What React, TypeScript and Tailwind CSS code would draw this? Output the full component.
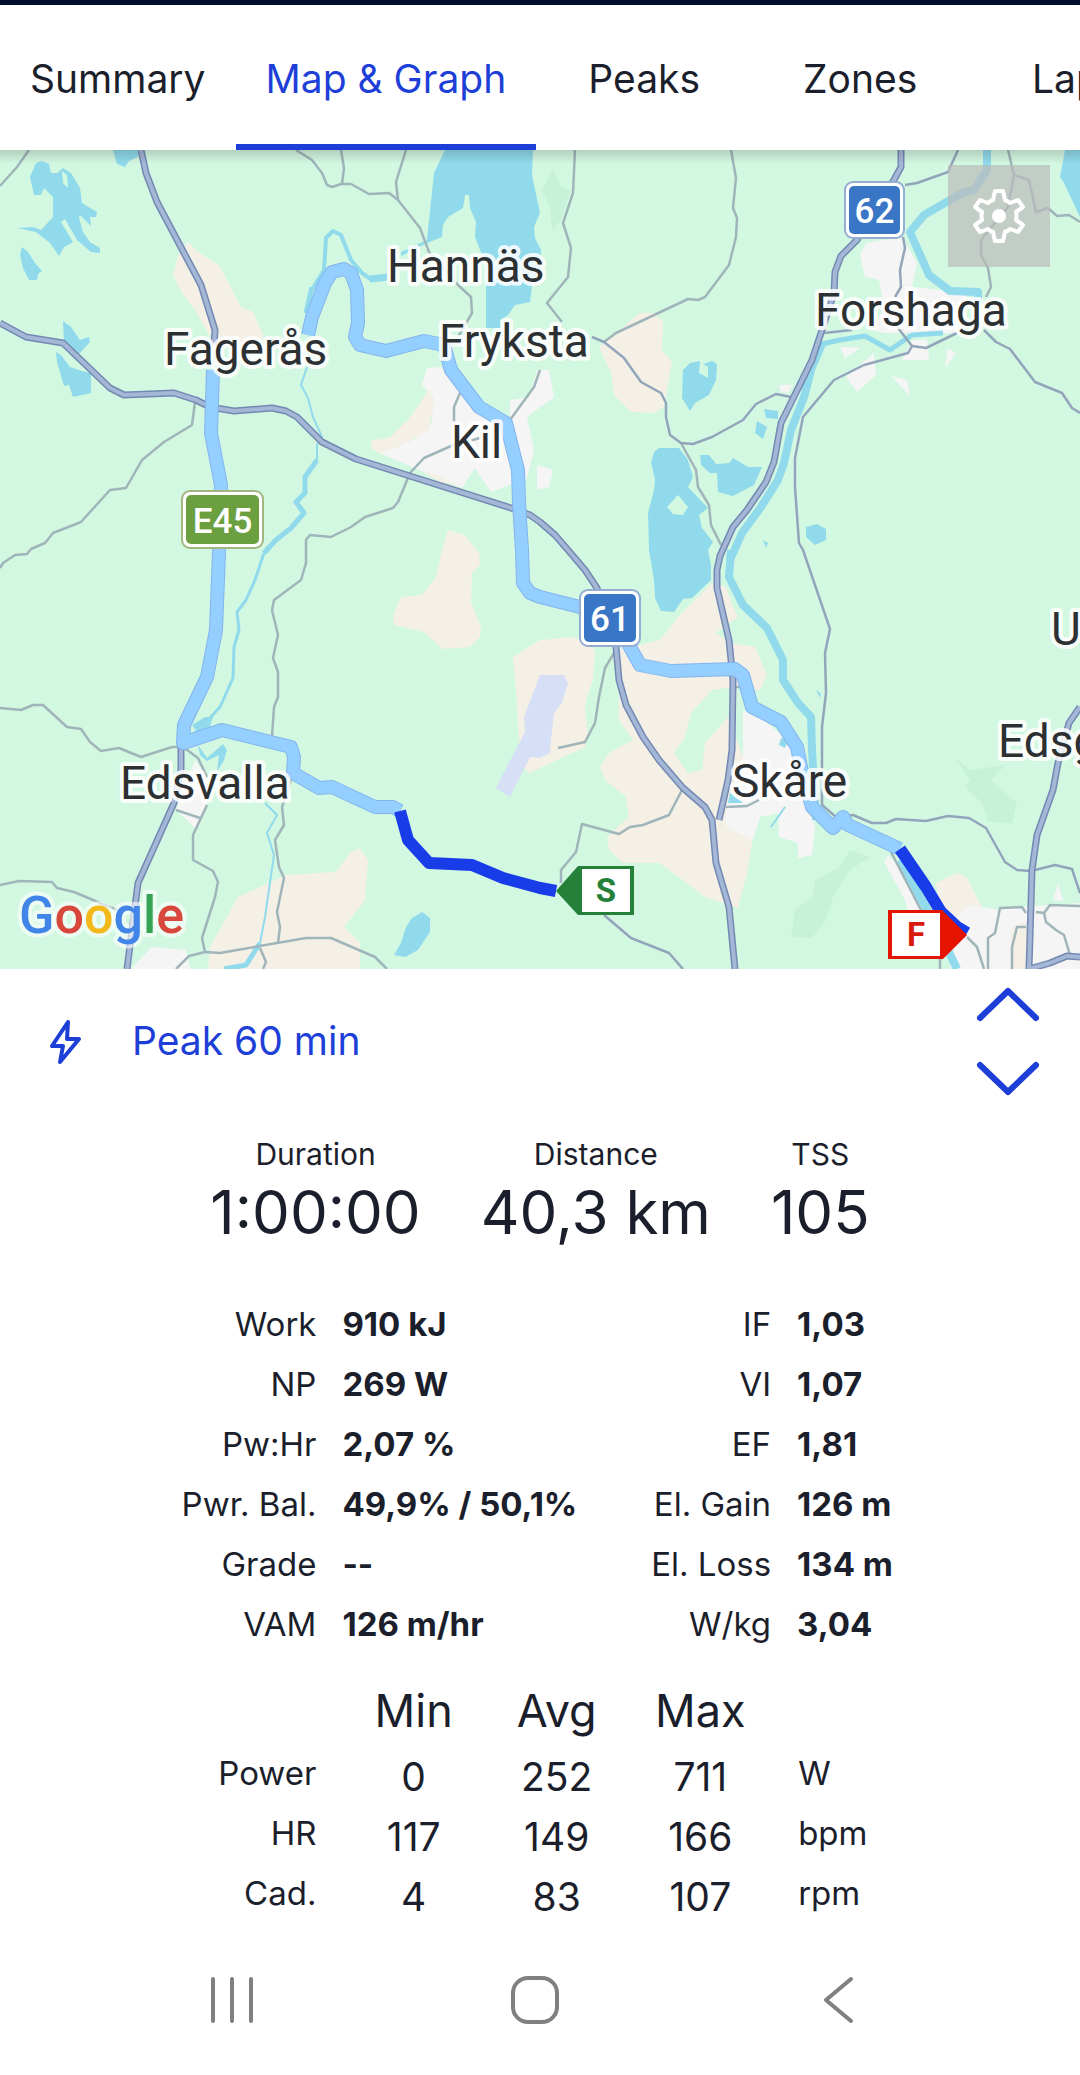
import { useState } from 'react';

// Mock Data
const tabs = ['Summary', 'Map & Graph', 'Peaks', 'Zones', 'Laps'];

const totals = [
  { label: 'Duration', value: '1:00:00' },
  { label: 'Distance', value: '40,3 km' },
  { label: 'TSS', value: '105' },
];

const stats = [
  { label: 'Work', value: '910 kJ' },
  { label: 'IF', value: '1,03' },
  { label: 'NP', value: '269 W' },
  { label: 'VI', value: '1,07' },
  { label: 'Pw:Hr', value: '2,07 %' },
  { label: 'EF', value: '1,81' },
  { label: 'Pwr. Bal.', value: '49,9% / 50,1%' },
  { label: 'El. Gain', value: '126 m' },
  { label: 'Grade', value: '--' },
  { label: 'El. Loss', value: '134 m' },
  { label: 'VAM', value: '126 m/hr' },
  { label: 'W/kg', value: '3,04' },
];

const ranges = [
  { label: 'Power', values: ['0', '252', '711'], unit: 'W' },
  { label: 'HR', values: ['117', '149', '166'], unit: 'bpm' },
  { label: 'Cad.', values: ['4', '83', '107'], unit: 'rpm' },
];

// Map geometry
const forest = [
  '553,168 561,187 571,190 561,220 552,230 550,207 542,190',
  '840,867 850,850 870,857 850,870 833,897 826,920 812,938 791,937 795,910 812,897 815,880',
  '955,758 970,770 1005,765 991,780 1017,803 1012,823 988,822 982,803 965,787 970,780',
];

const fields = [
  '188,242 198,252 219,265 241,307 253,312 264,337 250,350 215,345 195,310 182,293 173,275 178,256',
  '448,530 465,535 479,553 480,565 472,573 471,602 481,627 480,637 470,647 443,649 424,632 394,625 393,615 401,597 422,595 436,577 442,550',
  '513,657 540,640 574,637 595,650 593,680 586,700 585,710 588,735 585,747 540,768 530,773 525,770 519,740 516,690',
  '712,583 726,587 733,607 738,617 716,633 731,643 755,647 767,675 760,690 733,687 712,690 691,713 685,737 674,753 688,773 702,770 705,743 728,717 743,757 753,837 747,873 738,908 705,897 660,863 623,863 609,850 607,837 629,817 626,797 605,780 600,767 609,753 633,740 619,720 619,650 660,640 678,617',
  '360,848 368,860 365,900 344,927 360,943 360,969 208,969 210,947 238,897 286,875 336,872 351,852',
  '640,313 654,313 663,322 662,350 672,362 667,390 664,407 654,413 631,412 614,395 611,373 599,347 605,342',
  '936,883 957,873 967,878 982,907 982,940 940,912',
];

const towns = [
  '427,368 441,367 458,387 482,407 510,420 510,400 529,397 537,370 549,370 554,397 540,407 527,417 534,450 527,478 491,492 475,468 462,488 379,453 413,440 432,423 433,397 422,385',
  '537,465 553,470 549,487 537,490',
  '743,710 760,717 784,737 805,750 815,830 812,855 798,858 798,843 779,837 778,813 760,817 753,840 726,827 726,808 743,757',
  '195,760 207,777 207,803 195,828 176,810',
  '152,947 186,950 190,969 131,969',
  '866,243 902,237 917,263 912,287 967,293 960,333 885,333 872,330 884,307 879,280 865,277 860,255',
  '840,347 860,348 845,358',
  '846,377 874,353 876,375 857,392',
  '891,376 907,380 910,396',
  '948,348 956,353 945,368',
  '912,340 927,340 929,360 902,360',
  '779,385 793,385 788,393 781,392',
  '957,917 970,905 998,910 1022,907 1050,905 1080,903 1080,969 950,969',
  '1058,883 1053,900 1063,901',
  '888,855 903,870 925,920 910,920 905,900 884,862',
];

const townFields = [
  '429,390 434,403 429,430 396,448 379,453 371,448 372,440 389,438 408,420',
  '420,470 436,474 456,485 440,482',
  '1012,927 1030,920 1030,969 1010,969',
];

const water = [
  '36,163 42,161 49,164 51,173 57,173 63,168 71,173 80,188 82,203 97,212 96,217 90,217 91,226 80,215 79,218 83,232 90,242 100,248 100,253 91,252 77,240 65,219 61,222 73,242 64,247 59,256 50,243 36,232 17,228 33,227 41,230 53,217 53,197 44,188 41,195 34,195 30,177',
  '22,247 28,252 35,263 42,271 38,274 37,280 29,280 23,268 20,255',
  '113,150 138,150 138,157 129,161 125,167 117,164',
  '63,321 71,327 80,340 89,337 90,342 80,353 73,356 64,343',
  '56,352 61,355 70,367 82,371 91,373 91,393 73,397 69,385 64,386 57,362',
  '445,150 533,150 532,175 540,213 534,227 535,238 541,250 541,268 532,285 530,302 515,305 508,315 500,320 500,328 486,328 486,262 480,250 475,237 476,222 470,208 469,195 465,195 463,208 448,217 443,225 442,237 427,243 401,256 401,252 427,240 434,173',
  '192,725 205,717 213,717 208,732 198,733',
  '198,745 207,758 223,744 227,750 224,760 217,772 219,755 207,761 200,755',
  '422,912 430,918 430,932 418,950 405,957 394,955 401,943 406,927 412,918',
  '683,370 690,363 700,361 699,373 708,378 708,367 703,364 712,361 717,364 716,380 709,395 695,403 690,411 682,398',
  '764,409 778,411 778,419 766,418',
  '757,421 767,427 763,439 755,433',
  '659,448 679,448 688,460 693,477 688,487 708,508 699,515 702,528 713,542 708,550 711,565 711,580 692,598 683,599 674,612 661,611 655,598 654,580 649,550 648,513 654,490 655,480 651,462 654,452',
  '700,455 709,455 716,464 729,463 733,458 748,467 762,467 754,485 733,496 718,492 717,473 710,473 701,465',
  '806,527 817,524 826,529 826,540 815,545 806,537',
  '763,540 768,543 766,548',
  '1065,150 1080,150 1080,217 1064,183 1060,177',
  '816,690 821,694 820,698',
  '730,793 743,803 728,803',
  '781,738 788,740 785,748 779,745',
];

const islands = ['62,171 67,175 68,188 63,183', '678,495 688,507 683,515 673,514 667,507'];

const rivers = [
  { width: 4, points: '312,290 324,270 326,238 333,231 341,235 351,260 362,273 372,280' },
  { width: 7, points: '370,279 388,277' },
  { width: 5, points: '306,313 312,287' },
  { width: 2, points: '307,367 301,385 308,398 313,417 322,437 317,445 317,460' },
  { width: 5, points: '317,460 305,477 305,493 296,502 304,513 291,528 276,540 264,553' },
  { width: 3, points: '264,553 255,580 246,600 237,612 239,630 234,647 233,678 220,707 210,718 196,732' },
  { width: 2, points: '265,803 277,815 267,833 274,855 265,917 260,943' },
  { width: 5, points: '260,943 246,965 224,969' },
  { width: 8, points: '987,150 987,170 974,190 964,192 924,215 910,232 929,275 950,291 978,292 978,304' },
  { width: 5, points: '943,333 912,335 890,350 865,336 840,340 822,344 812,360' },
  { width: 8, points: '822,344 812,367 804,397 791,430 784,463 778,480 761,507 742,533 730,560' },
  { width: 8, points: '731,550 729,577 743,605 767,628 783,660 783,680 798,703 811,717 812,750 816,820' },
  { width: 2, points: '785,807 771,827' },
  { width: 8, points: '900,860 930,915 948,950 957,969' },
];

const minorRoads = [
  '29,150 17,167 0,186',
  '296,150 312,160 322,173 327,185 332,187 341,184 351,184 369,194 389,193 398,200 420,228 429,252 458,285 471,297 472,313 458,337',
  '341,150 344,168 342,184',
  '406,150 396,182 398,200',
  '195,402 192,425 164,442 142,460 126,488 110,490 81,522 53,533 45,543 31,549 27,554 15,555 3,563 0,568',
  '540,370 534,387 510,420',
  '460,393 454,407 454,423',
  '480,438 451,446 424,458 410,473 398,502 393,508 365,517 351,527 331,537 310,535 306,540 306,563 301,580 274,600 272,610 278,635 273,658 278,672 278,697 274,707 272,737',
  '291,780 282,807 284,825 275,840 279,867 284,878 277,912 280,927 278,943',
  '0,708 21,710 33,705 43,705 67,727 81,729 90,742 101,751 119,748 141,757 172,747 183,747 198,758 207,777',
  '0,885 19,881 52,882 57,888 74,892 117,910',
  '207,805 193,835 193,860 213,871 218,882 215,897 202,938 205,952',
  '176,810 200,818',
  '176,969 189,956 205,952 220,953 306,938 331,938 375,957 387,969',
  '260,948 266,962 263,969',
  '561,883 561,870 576,852 582,824 619,834 630,827 643,825 669,815 682,790',
  '614,653 605,668 599,697 595,723 585,742 558,748',
  '575,150 573,193 563,223 571,248 568,277 547,303 562,322',
  '731,150 736,178 733,208 737,218 736,237 729,265 705,297 698,300 688,299 616,333 604,342',
  '681,443 696,470 698,487 709,505 711,525 721,545',
  '1008,150 1014,175 1008,207 981,240 981,255 988,268 991,287 986,297',
  '1014,175 1029,180 1036,212 1048,208 1057,216 1069,215 1080,222',
  '726,807 747,806 759,800',
  '733,687 745,687',
  '967,937 977,947 984,969',
  '988,969 988,938 995,933 1000,908 1022,907 1026,913',
  '1026,927 1017,927 1012,947 1012,969',
  '1080,906 1050,905 1044,913 1036,912',
  '1044,913 1046,922 1056,930 1064,935 1070,955',
  '891,852 922,912 940,953 940,969',
];

const localRoads = [
  '604,915 631,938 669,953 683,969',
  '592,337 604,342 624,358 641,382 661,393 666,403 666,417 670,435 681,443 693,444 712,437 743,420 756,404 776,394 791,397',
  '957,333 926,348 912,346 908,353 864,365 834,380 803,417 795,458 795,487 799,543 803,550 830,629 825,653 826,693 822,727 822,805 836,817 853,815 872,823 886,823 896,819 926,821 948,816 969,818 986,828 1005,862 1017,870 1031,871 1055,865 1072,869 1080,893',
  '898,328 912,346',
  '824,333 852,330',
  '905,185 917,183 948,172 958,150',
  '903,237 905,248 900,270 901,287 895,297',
  '984,330 996,342 1010,349 1035,382 1062,393 1072,408 1080,413',
];

const majorRoads = [
  '141,150 146,173 157,202 201,285 215,330 214,345',
  '0,323 26,337 63,343 110,388 124,395 174,393 196,400 210,407 234,411 272,408 286,411 297,417 322,442 356,459 511,508 530,515 540,522 555,535 568,550 585,570 597,588 616,647 619,680 626,705 643,737 659,760 683,788 705,807 712,820 716,863 729,907 735,969',
  '901,150 901,167 895,178 857,240 841,256 835,272 834,293 821,333 812,360 781,423 774,462 766,482 747,510 733,527 720,556 717,570 717,588 729,640 733,680 732,750 728,780 719,820',
  '1080,707 1069,723 1058,763 1053,790 1037,835 1032,870 1029,969',
  '1029,969 1050,963 1067,956 1080,957',
  '181,745 181,770 174,803 138,883 127,969',
];

const ridePaths = [
  '308,335 312,317 325,283 332,272 344,269 351,273 357,290 358,323 355,337 360,345 386,351 424,341 444,345 451,370 479,407 506,423 518,470 519,503 522,550 523,583 530,593 540,597 580,607 620,625 630,647 640,665 671,671 735,669 743,675 752,707 781,722 797,747 803,777 812,807 833,828 843,817 848,825 900,849',
  '213,370 211,433 221,485 219,553 216,630 207,677 184,725 183,743 222,730 291,747 294,757 293,773 319,788 332,787 375,807 393,807 400,811',
];

const selectedPaths = [
  '900,849 926,887 941,912 957,927 967,933',
  '400,811 408,840 429,863 472,865 503,878 540,888 556,891',
];

const places = [
  { name: 'Hannäs', x: 387, y: 282 },
  { name: 'Fagerås', x: 164, y: 365 },
  { name: 'Fryksta', x: 439, y: 357 },
  { name: 'Kil', x: 451, y: 458 },
  { name: 'Forshaga', x: 815, y: 326 },
  { name: 'Edsvalla', x: 120, y: 799 },
  { name: 'Skåre', x: 732, y: 797 },
  { name: 'Ulvsby', x: 1051, y: 645 },
  { name: 'Edsgatan', x: 998, y: 757 },
];

const shields = [
  { text: 'E45', x: 181, y: 490, w: 83, h: 59, fill: '#6b9f3f', edge: '#a3b67f' },
  { text: '62', x: 844, y: 181, w: 61, h: 58, fill: '#3a76c6', edge: '#94aed2' },
  { text: '61', x: 579, y: 589, w: 62, h: 58, fill: '#3a76c6', edge: '#94aed2' },
];

const RouteMap = () => (
  <svg viewBox="0 150 1080 819" className="block w-full bg-[#d3f8e2]" role="img" aria-label="Route map">
    <defs>
      <linearGradient id="shade" x1="0" y1="0" x2="0" y2="1">
        <stop offset="0" stopColor="#000" stopOpacity="0.16" />
        <stop offset="1" stopColor="#000" stopOpacity="0" />
      </linearGradient>
    </defs>

    {/* Land cover */}
    <g fill="#c7f1d9">{forest.map((p) => <polygon key={p} points={p} />)}</g>
    <g fill="#f5f0e6">{fields.map((p) => <polygon key={p} points={p} />)}</g>
    <g fill="#f5f5f5">{towns.map((p) => <polygon key={p} points={p} />)}</g>
    <g fill="#f4f0e5">{townFields.map((p) => <polygon key={p} points={p} />)}</g>
    <polygon
      fill="#d6dff5"
      points="540,675 564,675 568,683 562,703 554,713 551,740 550,753 540,758 530,757 510,797 496,788 525,732 524,717"
    />

    {/* Water */}
    <g fill="#90daec">{water.map((p) => <polygon key={p} points={p} />)}</g>
    <g fill="#d3f8e2">{islands.map((p) => <polygon key={p} points={p} />)}</g>
    <g fill="none" stroke="#90daec" strokeLinejoin="round">
      {rivers.map((r) => (
        <polyline key={r.points} points={r.points} strokeWidth={r.width} />
      ))}
    </g>

    {/* Roads */}
    <g fill="none" strokeLinejoin="round" strokeWidth="2.5">
      <g stroke="#a0b5b9">{minorRoads.map((p) => <polyline key={p} points={p} />)}</g>
      <g stroke="#93a5ba">{localRoads.map((p) => <polyline key={p} points={p} />)}</g>
      <g stroke="#7389b2" strokeWidth="7">{majorRoads.map((p) => <polyline key={p} points={p} />)}</g>
      <g stroke="#a5b7d7" strokeWidth="4">{majorRoads.map((p) => <polyline key={p} points={p} />)}</g>
    </g>

    {/* Ride */}
    <g fill="none" strokeLinejoin="round">
      <g stroke="#82b4ef" strokeWidth="14">{ridePaths.map((p) => <polyline key={p} points={p} />)}</g>
      <g stroke="#95cfff" strokeWidth="12">{ridePaths.map((p) => <polyline key={p} points={p} />)}</g>
      <g stroke="#183de8" strokeWidth="12">{selectedPaths.map((p) => <polyline key={p} points={p} />)}</g>
    </g>

    {/* Place names */}
    <g
      className="font-['Roboto',sans-serif] text-[46px]"
      fill="#2d3033"
      stroke="#fff"
      strokeOpacity="0.85"
      strokeWidth="8"
      strokeLinejoin="round"
      paintOrder="stroke"
    >
      {places.map((place) => (
        <text key={place.name} x={place.x} y={place.y}>{place.name}</text>
      ))}
    </g>

    {/* Road shields */}
    {shields.map((s) => (
      <g key={s.text}>
        <rect x={s.x} y={s.y} width={s.w} height={s.h} rx="9" fill={s.edge} />
        <rect x={s.x + 2} y={s.y + 2} width={s.w - 4} height={s.h - 4} rx="7" fill="#fff" />
        <rect x={s.x + 5} y={s.y + 5} width={s.w - 10} height={s.h - 10} rx="5" fill={s.fill} />
        <text
          x={s.x + s.w / 2}
          y={s.y + s.h / 2 + 13}
          textAnchor="middle"
          fill="#fff"
          className="font-['Roboto',sans-serif] text-[35px] font-medium"
        >
          {s.text}
        </text>
      </g>
    ))}

    {/* Start and finish flags */}
    <g className="font-['Roboto',sans-serif] text-[33px] font-bold" textAnchor="middle">
      <path d="M556 891 578 866H634V915H578Z" fill="#258039" />
      <rect x="582" y="869" width="48" height="43" fill="#fff" />
      <text x="606" y="902" fill="#258039">S</text>
      <path d="M888 910H942L967 935 943 959H888Z" fill="#e51400" />
      <rect x="892" y="913" width="48" height="43" fill="#fff" />
      <text x="916" y="946" fill="#d8190e">F</text>
    </g>

    {/* Attribution */}
    <text
      x="19"
      y="933"
      stroke="#fff"
      strokeOpacity="0.6"
      strokeWidth="8"
      strokeLinejoin="round"
      paintOrder="stroke"
      className="font-['Roboto',sans-serif] text-[52px] font-medium"
    >
      <tspan fill="#4285e8">G</tspan>
      <tspan fill="#d8473b">o</tspan>
      <tspan fill="#f3b91a">o</tspan>
      <tspan fill="#4285e8">g</tspan>
      <tspan fill="#34a453">l</tspan>
      <tspan fill="#d8473b">e</tspan>
    </text>

    <rect x="0" y="150" width="1080" height="14" fill="url(#shade)" />
  </svg>
);

const App = () => {
  const [activeTab, setActiveTab] = useState('Map & Graph');

  return (
    <div className="min-h-screen overflow-hidden bg-white font-['Inter',sans-serif] text-[#1b1e2b] [font-optical-sizing:none]">
      <div className="h-[5px] bg-[#020d2e]" />

      {/* Tabs */}
      <nav role="tablist" className="flex h-[145px]">
        {tabs.map((tab) => (
          <button
            key={tab}
            role="tab"
            aria-selected={activeTab === tab}
            onClick={() => setActiveTab(tab)}
            className={`min-w-[216px] shrink-0 border-b-[6px] px-[30px] pt-[10px] text-[39px] ${
              activeTab === tab ? 'border-[#1d3fd8] text-[#1d3fd8]' : 'border-transparent'
            }`}
          >
            {tab}
          </button>
        ))}
      </nav>

      {/* Map */}
      <div className="relative">
        <RouteMap />
        <button
          aria-label="Map settings"
          className="absolute top-[15px] right-[30px] flex size-[102px] items-center justify-center bg-[#bababa]/70"
        >
          <svg viewBox="-30 -30 60 60" className="size-[60px]" fill="none" stroke="#fff" strokeWidth="4" strokeLinejoin="round">
            <path d="M-4-25H4L6-16Q9-15 11-13L19-16 24-9 17-4Q18 0 17 4L24 9 19 16 11 13Q9 15 6 16L4 25H-4L-6 16Q-9 15-11 13L-19 16-24 9-17 4Q-18 0-17-4L-24-9-19-16-11-13Q-9-15-6-16Z" />
            <circle r="7" fill="#fff" stroke="none" />
          </svg>
        </button>
      </div>

      {/* Selected range */}
      <div className="flex h-[145px] items-center pr-10 pl-12">
        <svg viewBox="0 0 36 50" className="h-[50px] w-9" fill="none" stroke="#1d3fd8" strokeWidth="4" strokeLinejoin="round">
          <path d="M20 5 4 29H15L12 45 31 22H19Z" />
        </svg>
        <h1 className="ml-12 text-[39px] text-[#1d3fd8]">Peak 60 min</h1>
        <div className="ml-auto flex flex-col gap-9">
          <button aria-label="Previous range">
            <svg viewBox="0 0 64 38" className="h-[38px] w-16" fill="none" stroke="#1d3fd8" strokeWidth="6" strokeLinecap="round" strokeLinejoin="round">
              <path d="M4 32 32 5 60 32" />
            </svg>
          </button>
          <button aria-label="Next range">
            <svg viewBox="0 0 64 38" className="h-[38px] w-16" fill="none" stroke="#1d3fd8" strokeWidth="6" strokeLinecap="round" strokeLinejoin="round">
              <path d="M4 5 32 32 60 5" />
            </svg>
          </button>
        </div>
      </div>

      {/* Totals */}
      <dl className="mt-5 flex justify-center gap-[60px] text-center">
        {totals.map((item) => (
          <div key={item.label}>
            <dt className="text-[30px] leading-[40px]">{item.label}</dt>
            <dd className="text-[60px] leading-[76px]">{item.value}</dd>
          </div>
        ))}
      </dl>

      {/* Stats */}
      <dl className="mt-11 grid grid-cols-[29.3%_25.3%_16.8%_1fr] text-[33px] leading-[60px] whitespace-nowrap">
        {stats.map((item) => (
          <div key={item.label} className="contents">
            <dt className="flex justify-end">{item.label}</dt>
            <dd className="pl-[26px] font-bold">{item.value}</dd>
          </div>
        ))}
      </dl>

      {/* Min / avg / max */}
      <table className="mt-[22px] w-full table-fixed text-[33px] leading-[60px]">
        <colgroup>
          <col className="w-[29.3%]" />
          <col className="w-[15.6%]" />
          <col className="w-[13.3%]" />
          <col className="w-[13.3%]" />
          <col />
        </colgroup>
        <thead>
          <tr className="text-[45px] leading-[70px]">
            <td />
            <th scope="col" className="pl-[26px] font-normal">Min</th>
            <th scope="col" className="font-normal">Avg</th>
            <th scope="col" className="font-normal">Max</th>
            <td />
          </tr>
        </thead>
        <tbody>
          {ranges.map((row) => (
            <tr key={row.label} className="align-top">
              <th scope="row" className="text-right leading-[54px] font-normal">{row.label}</th>
              {row.values.map((value, i) => (
                <td key={i} className="pt-[2px] text-center text-[39px] leading-[58px] first-of-type:pl-[26px]">{value}</td>
              ))}
              <td className="pl-[26px] leading-[54px]">{row.unit}</td>
            </tr>
          ))}
        </tbody>
      </table>

      {/* System navigation */}
      <div className="mt-[14px] grid h-[120px] grid-cols-3 place-items-center pr-[90px] pl-20">
        <button aria-label="Recent apps">
          <svg viewBox="0 0 48 48" className="size-12" stroke="#808080" strokeWidth="4" strokeLinecap="round">
            <path d="M5 3V45M24 3V45M43 3V45" />
          </svg>
        </button>
        <button aria-label="Home">
          <svg viewBox="0 0 48 48" className="size-12" fill="none" stroke="#808080" strokeWidth="4">
            <rect x="2" y="2" width="44" height="44" rx="15" />
          </svg>
        </button>
        <button aria-label="Back">
          <svg viewBox="0 0 48 48" className="size-12" fill="none" stroke="#808080" strokeWidth="4" strokeLinecap="round" strokeLinejoin="round">
            <path d="M37 3 12 24 37 45" />
          </svg>
        </button>
      </div>
    </div>
  );
};

export default App;
